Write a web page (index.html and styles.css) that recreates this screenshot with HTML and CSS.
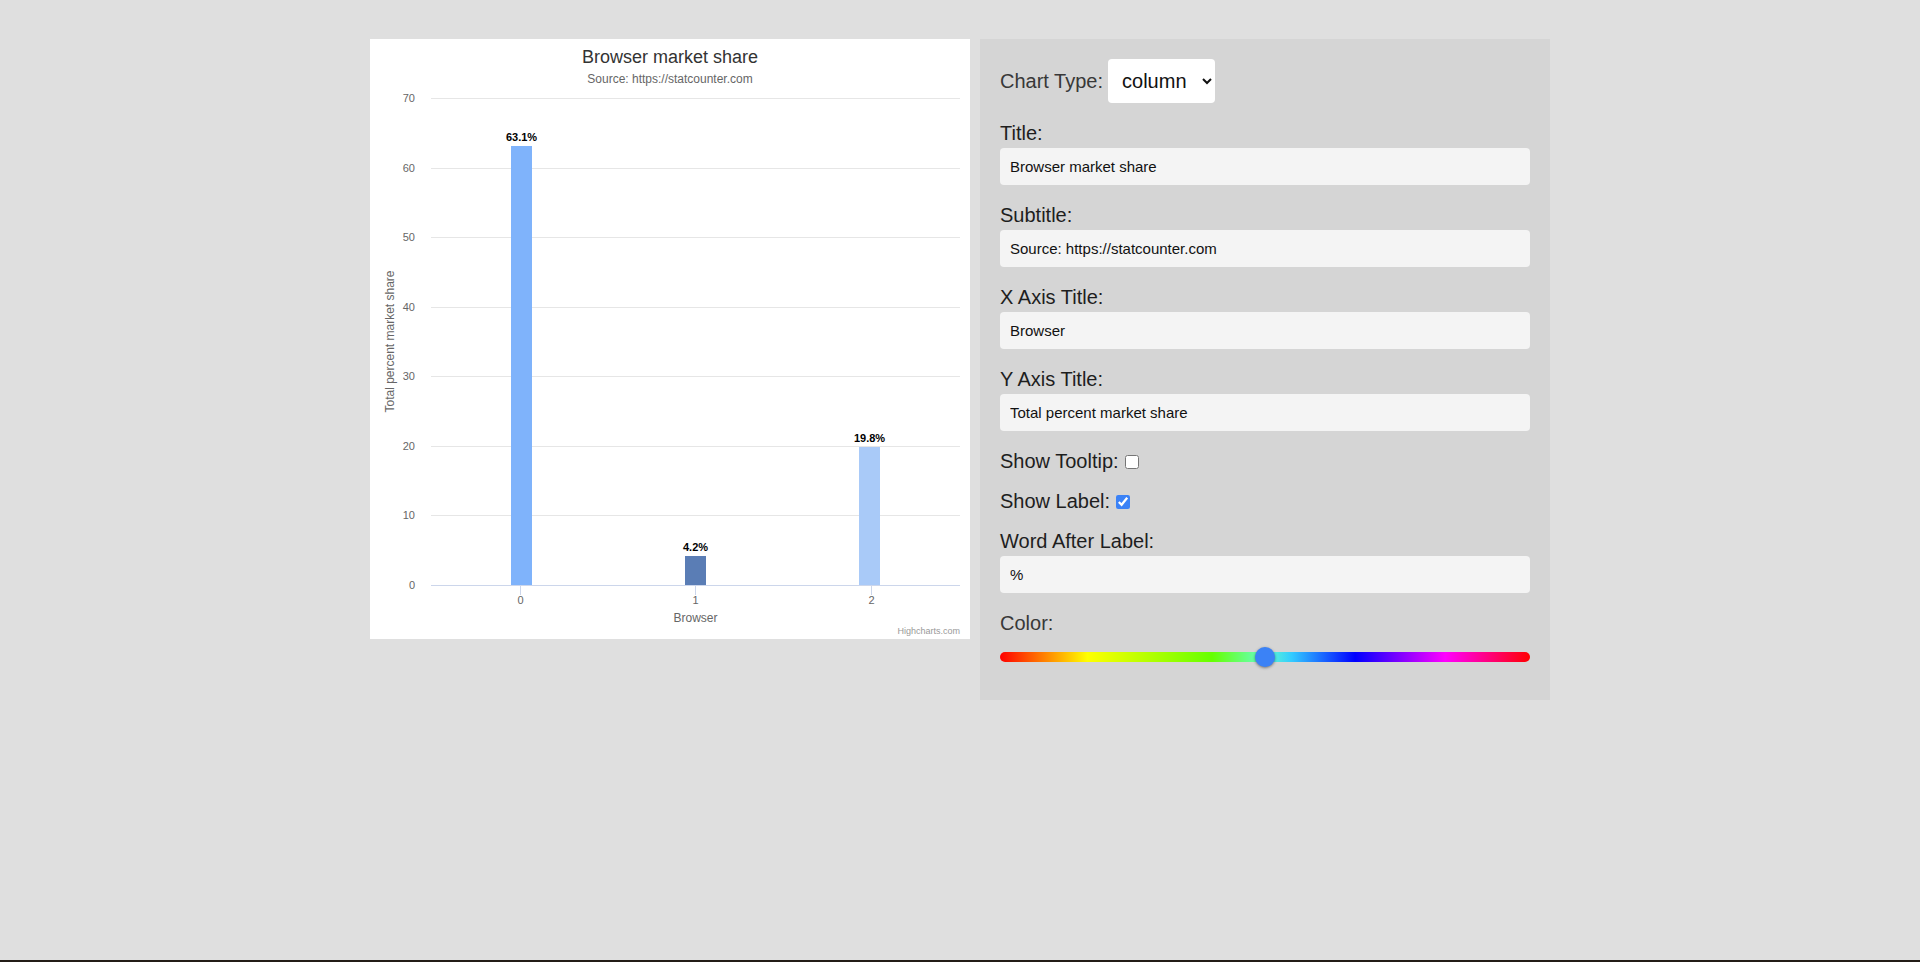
FILE: index.html
```html
<!DOCTYPE html>
<html lang="en">
<head>
<meta charset="utf-8">
<title>Chart Editor</title>
<link rel="stylesheet" href="styles.css">
</head>
<body>
<div class="layout">
  <div class="chart">
    <svg class="chart-svg" width="600" height="600" viewBox="0 0 600 600" xmlns="http://www.w3.org/2000/svg">
      <rect x="0" y="0" width="600" height="600" fill="#ffffff"/>
      <text class="c-title" x="300" y="24" text-anchor="middle">Browser market share</text>
      <text class="c-subtitle" x="300" y="44" text-anchor="middle">Source: https://statcounter.com</text>
      <g class="grid">
        <line x1="61" x2="590" y1="59.5" y2="59.5"/>
        <line x1="61" x2="590" y1="129.5" y2="129.5"/>
        <line x1="61" x2="590" y1="198.5" y2="198.5"/>
        <line x1="61" x2="590" y1="268.5" y2="268.5"/>
        <line x1="61" x2="590" y1="337.5" y2="337.5"/>
        <line x1="61" x2="590" y1="407.5" y2="407.5"/>
        <line x1="61" x2="590" y1="476.5" y2="476.5"/>
      </g>
      <g class="ylabels">
        <text x="45" y="63">70</text>
        <text x="45" y="133">60</text>
        <text x="45" y="202">50</text>
        <text x="45" y="272">40</text>
        <text x="45" y="341">30</text>
        <text x="45" y="411">20</text>
        <text x="45" y="480">10</text>
        <text x="45" y="550">0</text>
      </g>
      <text class="axis-title" x="24" y="302.5" text-anchor="middle" transform="rotate(-90 24 302.5)">Total percent market share</text>
      <rect x="141" y="107" width="21" height="439" fill="#7fb3fb"/>
      <rect x="315" y="517" width="21" height="29" fill="#5a7db5"/>
      <rect x="489" y="408" width="21" height="138" fill="#a9caf8"/>
      <g class="axis">
        <line x1="61" x2="590" y1="546.5" y2="546.5"/>
        <line x1="150.5" x2="150.5" y1="546" y2="556"/>
        <line x1="325.5" x2="325.5" y1="546" y2="556"/>
        <line x1="501.5" x2="501.5" y1="546" y2="556"/>
      </g>
      <g class="xlabels">
        <text x="150.5" y="565" text-anchor="middle">0</text>
        <text x="325.5" y="565" text-anchor="middle">1</text>
        <text x="501.5" y="565" text-anchor="middle">2</text>
      </g>
      <text class="axis-title" x="325.5" y="582.5" text-anchor="middle">Browser</text>
      <g class="dlabels">
        <text x="151.5" y="102" text-anchor="middle">63.1%</text>
        <text x="325.5" y="512" text-anchor="middle">4.2%</text>
        <text x="499.5" y="403" text-anchor="middle">19.8%</text>
      </g>
      <text class="credits" x="590" y="594.5" text-anchor="end">Highcharts.com</text>
    </svg>
  </div>

  <form class="panel">
    <div class="row-type">
      <label class="lbl lbl-type" for="type">Chart Type:</label>
      <select id="type" class="select">
        <option>column</option>
        <option>bar</option>
        <option>line</option>
        <option>pie</option>
      </select>
    </div>

    <div class="field">
      <label class="lbl" for="t">Title:</label>
      <input id="t" class="text-input" type="text" value="Browser market share">
    </div>
    <div class="field">
      <label class="lbl" for="st">Subtitle:</label>
      <input id="st" class="text-input" type="text" value="Source: https://statcounter.com">
    </div>
    <div class="field">
      <label class="lbl" for="xt">X Axis Title:</label>
      <input id="xt" class="text-input" type="text" value="Browser">
    </div>
    <div class="field">
      <label class="lbl" for="yt">Y Axis Title:</label>
      <input id="yt" class="text-input" type="text" value="Total percent market share">
    </div>

    <div class="check-row">
      <label class="lbl" for="tt">Show Tooltip:</label>
      <input id="tt" class="check" type="checkbox">
    </div>
    <div class="check-row">
      <label class="lbl" for="sl">Show Label:</label>
      <input id="sl" class="check" type="checkbox" checked>
    </div>

    <div class="field">
      <label class="lbl" for="wa">Word After Label:</label>
      <input id="wa" class="text-input" type="text" value="%">
    </div>

    <div class="field-color">
      <label class="lbl lbl-color" for="col">Color:</label>
      <input id="col" class="hue" type="range" min="0" max="360" value="180">
    </div>
  </form>
</div>
<div class="taskbar-edge"></div>
</body>
</html>
```

FILE: styles.css
```css
html, body {
  margin: 0;
  padding: 0;
}

body {
  background: #dfdfdf;
  font-family: "Liberation Sans", Arial, sans-serif;
  height: 962px;
  overflow: hidden;
}

.layout {
  display: flex;
  justify-content: center;
  align-items: flex-start;
  gap: 10px;
  padding-top: 39px;
}

.chart {
  width: 600px;
  height: 600px;
  background: #ffffff;
  flex: none;
}

.chart-svg {
  display: block;
  font-family: "Liberation Sans", Arial, sans-serif;
}

.c-title {
  font-size: 18px;
  fill: #333333;
}

.c-subtitle {
  font-size: 12px;
  fill: #666666;
}

.grid line {
  stroke: #e6e6e6;
  stroke-width: 1;
}

.axis line {
  stroke: #ccd6eb;
  stroke-width: 1;
}

.ylabels text {
  font-size: 11px;
  fill: #666666;
  text-anchor: end;
}

.xlabels text {
  font-size: 11px;
  fill: #666666;
}

.axis-title {
  font-size: 12px;
  fill: #666666;
}

.dlabels text {
  font-size: 11px;
  font-weight: bold;
  fill: #000000;
  stroke: #ffffff;
  stroke-width: 2px;
  stroke-linejoin: round;
  paint-order: stroke;
}

.credits {
  font-size: 9px;
  fill: #999999;
}

.panel {
  width: 570px;
  box-sizing: border-box;
  padding: 20px;
  background: #d5d5d5;
  margin: 0;
  flex: none;
}

.lbl {
  font-size: 20px;
  line-height: 23px;
  color: #1e1e1e;
}

.lbl-type,
.lbl-color {
  color: #383838;
}

.row-type {
  display: flex;
  align-items: center;
  height: 44px;
  margin-bottom: 18px;
}

.select {
  margin-left: 5px;
  width: 107px;
  height: 44px;
  padding: 0 8px 0 10px;
  font-family: "Liberation Sans", Arial, sans-serif;
  font-size: 20px;
  color: #111111;
  background: #ffffff;
  border: none;
  border-radius: 4px;
}

.field {
  display: flex;
  flex-direction: column;
  margin-bottom: 18px;
}

.field .lbl {
  display: block;
  padding-top: 1px;
}

.text-input {
  margin-top: 3px;
  height: 37px;
  box-sizing: border-box;
  padding: 0 10px;
  border: none;
  border-radius: 4px;
  background: #f4f4f4;
  font-family: "Liberation Sans", Arial, sans-serif;
  font-size: 15px;
  color: #111111;
  width: 100%;
  outline: none;
}

.check-row {
  display: flex;
  align-items: center;
  height: 23px;
  padding-top: 1px;
  margin-bottom: 16px;
}

.check {
  width: 14px;
  height: 14px;
  margin: 1px 0 0 6px;
  accent-color: #3b82f6;
}

.field-color {
  display: flex;
  flex-direction: column;
}

.field-color .lbl {
  padding-top: 1px;
}

.hue {
  -webkit-appearance: none;
  appearance: none;
  display: block;
  width: 100%;
  height: 10px;
  margin: 17px 0 18px 0;
  padding: 0;
  border-radius: 5px;
  background: linear-gradient(to right, #ff0000 0%, #ffff00 16.5%, #66ff00 40%, #66ffcc 50%, #33ccff 55%, #0000ff 67%, #ff00ff 84%, #ff0000 100%);
  outline: none;
}

.hue::-webkit-slider-thumb {
  -webkit-appearance: none;
  appearance: none;
  width: 20px;
  height: 20px;
  border-radius: 50%;
  background: #3b82f6;
  box-shadow: 0 1px 3px rgba(0, 0, 0, 0.45);
  cursor: pointer;
}

.taskbar-edge {
  position: fixed;
  left: 0;
  right: 0;
  bottom: 0;
  height: 2px;
  background: #231c17;
}
```
